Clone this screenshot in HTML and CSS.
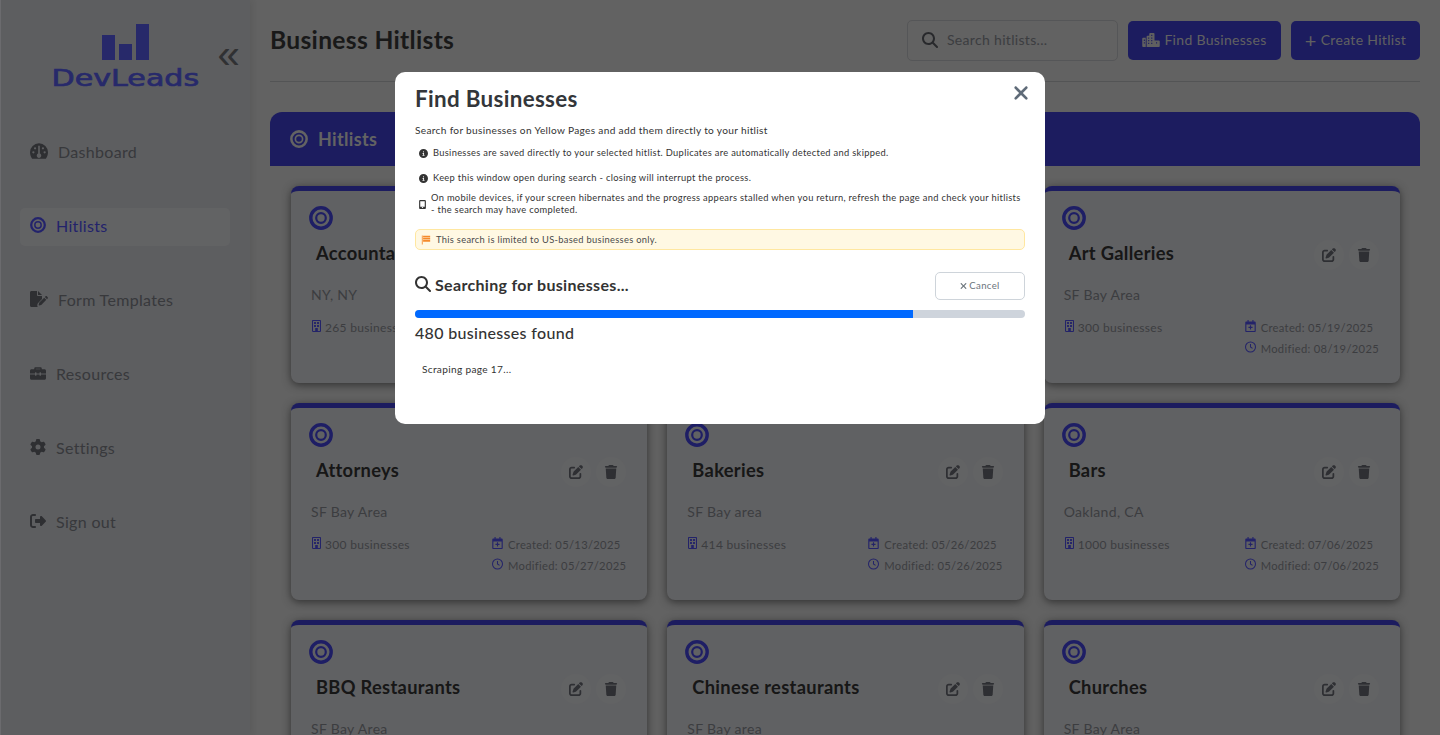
FILE: index.html
```html
<!DOCTYPE html>
<html lang="en">
<head>
    <meta charset="UTF-8">
    <meta name="viewport" content="width=device-width, initial-scale=1.0">
    <title>Business Hitlists</title>
    <link rel="stylesheet" href="styles.css">
</head>
<body>
<svg class="sprite" aria-hidden="true">
    <symbol id="i-search" viewBox="0 0 512 512"><path d="M416 208c0 45.9-14.9 88.3-40 122.7L502.6 457.4c12.5 12.5 12.5 32.8 0 45.3s-32.8 12.5-45.3 0L330.7 376c-34.4 25.2-76.8 40-122.7 40C93.1 416 0 322.9 0 208S93.1 0 208 0S416 93.1 416 208zM208 352a144 144 0 1 0 0-288 144 144 0 1 0 0 288z"/></symbol>
    <symbol id="i-trash" viewBox="0 0 448 512"><path d="M135.2 17.7L128 32H32C14.3 32 0 46.3 0 64S14.3 96 32 96H416c17.7 0 32-14.3 32-32s-14.3-32-32-32H320l-7.2-14.3C307.4 6.8 296.3 0 284.2 0H163.8c-12.1 0-23.2 6.8-28.6 17.7zM416 128H32L53.2 467c1.6 25.3 22.6 45 47.9 45H346.9c25.3 0 46.3-19.7 47.9-45L416 128z"/></symbol>
    <symbol id="i-edit" viewBox="0 0 512 512"><path d="M471.6 21.7c-21.9-21.9-57.3-21.9-79.2 0L362.3 51.7l97.9 97.9 30.1-30.1c21.9-21.9 21.9-57.3 0-79.2L471.6 21.7zm-299.2 220c-6.1 6.1-10.8 13.6-13.5 21.9l-29.6 88.8c-2.9 8.6-.6 18.1 5.8 24.6s15.9 8.7 24.6 5.8l88.8-29.6c8.2-2.7 15.7-7.4 21.9-13.5L437.7 172.3 339.7 74.3 172.4 241.7zM96 64C43 64 0 107 0 160V416c0 53 43 96 96 96H352c53 0 96-43 96-96V320c0-17.7-14.3-32-32-32s-32 14.3-32 32v96c0 17.7-14.3 32-32 32H96c-17.7 0-32-14.3-32-32V160c0-17.7 14.3-32 32-32h96c17.7 0 32-14.3 32-32s-14.3-32-32-32H96z"/></symbol>
    <symbol id="i-info" viewBox="0 0 512 512"><path d="M256 512A256 256 0 1 0 256 0a256 256 0 1 0 0 512zM216 336h24V272H216c-13.3 0-24-10.7-24-24s10.7-24 24-24h48c13.3 0 24 10.7 24 24v88h8c13.3 0 24 10.7 24 24s-10.7 24-24 24H216c-13.3 0-24-10.7-24-24s10.7-24 24-24zm40-208a32 32 0 1 1 0 64 32 32 0 1 1 0-64z"/></symbol>
    <symbol id="i-close" viewBox="0 0 384 512"><path d="M342.6 150.6c12.5-12.5 12.5-32.8 0-45.3s-32.8-12.5-45.3 0L192 210.7 86.6 105.4c-12.5-12.5-32.8-12.5-45.3 0s-12.5 32.8 0 45.3L146.7 256 41.4 361.4c-12.5 12.5-12.5 32.8 0 45.3s32.8 12.5 45.3 0L192 301.3 297.4 406.6c12.5 12.5 32.8 12.5 45.3 0s12.5-32.8 0-45.3L237.3 256 342.6 150.6z"/></symbol>
    <symbol id="i-signout" viewBox="0 0 512 512"><path d="M377.9 105.9L500.7 228.7c7.2 7.2 11.3 17.1 11.3 27.3s-4.1 20.1-11.3 27.3L377.9 406.1c-6.4 6.4-15 9.9-24 9.9c-18.7 0-33.9-15.2-33.9-33.9l0-62.1-128 0c-17.7 0-32-14.3-32-32l0-64c0-17.7 14.3-32 32-32l128 0 0-62.1c0-18.7 15.2-33.9 33.9-33.9c9 0 17.6 3.6 24 9.9zM160 96L96 96c-17.7 0-32 14.3-32 32l0 256c0 17.7 14.3 32 32 32l64 0c17.7 0 32 14.3 32 32s-14.3 32-32 32l-64 0c-53 0-96-43-96-96L0 128C0 75 43 32 96 32l64 0c17.7 0 32 14.3 32 32s-14.3 32-32 32z"/></symbol>
    <symbol id="i-gauge" viewBox="0 0 512 440"><path d="M0 256a256 256 0 1 1 512 0c0 70-25 130-60 184H60C25 386 0 326 0 256zm320 96c0-26.9-16.5-49.9-40-59.3V88c0-13.3-10.7-24-24-24s-24 10.7-24 24V292.7c-23.5 9.5-40 32.5-40 59.3c0 35.3 28.7 64 64 64s64-28.7 64-64zM144 176a32 32 0 1 0 0-64 32 32 0 1 0 0 64zm-16 80a32 32 0 1 0 -64 0 32 32 0 1 0 64 0zm288 32a32 32 0 1 0 0-64 32 32 0 1 0 0 64zM400 144a32 32 0 1 0 -64 0 32 32 0 1 0 64 0z"/></symbol>
    <symbol id="i-gear" viewBox="0 0 512 512"><path d="M495.9 166.6c3.2 8.7 .5 18.4-6.4 24.6l-43.3 39.4c1.1 8.3 1.7 16.8 1.7 25.4s-.6 17.1-1.7 25.4l43.3 39.4c6.9 6.2 9.6 15.9 6.4 24.6c-4.4 11.9-9.7 23.3-15.8 34.3l-4.7 8.1c-6.6 11-14 21.4-22.1 31.2c-5.9 7.2-15.7 9.6-24.5 6.8l-55.7-17.7c-13.4 10.3-28.2 18.9-44 25.4l-12.5 57.1c-2 9.1-9 16.3-18.2 17.8c-13.8 2.3-28 3.5-42.5 3.5s-28.7-1.2-42.5-3.5c-9.2-1.5-16.2-8.7-18.2-17.8l-12.5-57.1c-15.8-6.5-30.6-15.1-44-25.4L83.1 425.9c-8.8 2.8-18.6 .3-24.5-6.8c-8.1-9.8-15.5-20.2-22.1-31.2l-4.7-8.1c-6.1-11-11.4-22.4-15.8-34.3c-3.2-8.7-.5-18.4 6.4-24.6l43.3-39.4C64.6 273.1 64 264.6 64 256s.6-17.1 1.7-25.4L22.4 191.2c-6.9-6.2-9.6-15.9-6.4-24.6c4.4-11.9 9.7-23.3 15.8-34.3l4.7-8.1c6.6-11 14-21.4 22.1-31.2c5.9-7.2 15.7-9.6 24.5-6.8l55.7 17.7c13.4-10.3 28.2-18.9 44-25.4l12.5-57.1c2-9.1 9-16.3 18.2-17.8C227.3 1.2 241.5 0 256 0s28.7 1.2 42.5 3.5c9.2 1.5 16.2 8.7 18.2 17.8l12.5 57.1c15.8 6.5 30.6 15.1 44 25.4l55.7-17.7c8.8-2.8 18.6-.3 24.5 6.8c8.1 9.8 15.5 20.2 22.1 31.2l4.7 8.1c6.1 11 11.4 22.4 15.8 34.3zM256 336a80 80 0 1 0 0-160 80 80 0 1 0 0 160z"/></symbol>
    <symbol id="i-briefcase" viewBox="0 0 512 448"><path d="M176 40h160c22 0 40 18 40 40v24h88c26 0 48 22 48 48v88H352v-24c0-9-7-16-16-16h-16c-9 0-16 7-16 16v24H208v-24c0-9-7-16-16-16h-16c-9 0-16 7-16 16v24H0v-88c0-26 22-48 48-48h88V80c0-22 18-40 40-40zm8 64h144V88H184v16zM0 272h160v24c0 9 7 16 16 16h16c9 0 16-7 16-16v-24h96v24c0 9 7 16 16 16h16c9 0 16-7 16-16v-24h160v120c0 26-22 48-48 48H48c-26 0-48-22-48-48V272z"/></symbol>
    <symbol id="i-file" viewBox="0 0 576 512"><path d="M0 48C0 22 22 0 48 0h176v128c0 18 14 32 32 32h128v96L260 380c-8 8-14 18-17 29l-10 39c-3 13 0 26 7 36v28H48c-26 0-48-22-48-48V48zm256-48l128 128H256V0zM60 420c20-45 42-72 60-72 15 0 22 14 27 30 12-14 26-22 40-20l-8 28c-12 0-22 14-34 30-10 12-28 6-32-14-12 8-24 24-32 40l-21-22zM540 170l26 26c12 12 12 30 0 42l-22 22-68-68 22-22c12-12 30-12 42 0zM300 368l154-154 68 68-154 154c-4 4-9 7-15 9l-58 15c-10 2-19-7-17-17l15-58c1-6 4-12 7-17z"/></symbol>
    <symbol id="i-building" viewBox="0 0 384 512"><path fill-rule="evenodd" d="M40 0h304c22 0 40 18 40 40v432c0 22-18 40-40 40H40c-22 0-40-18-40-40V40C0 18 18 0 40 0zm4 44v424h296V44H44z"/><path d="M88 88h80v80H88zM216 88h80v80h-80zM88 216h80v80H88zM216 216h80v80h-80zM136 344h112v130H136z"/></symbol>
    <symbol id="i-calendar" viewBox="0 0 448 512"><path fill-rule="evenodd" d="M96 0h48v64h160V0h48v64h48c26 0 48 22 48 48v352c0 26-22 48-48 48H48c-26 0-48-22-48-48V112c0-26 22-48 48-48h48V0zM48 192v272h352V192H48zm152 32h48v64h64v48h-64v64h-48v-64h-64v-48h64v-64z"/></symbol>
    <symbol id="i-clock" viewBox="0 0 512 512"><path fill-rule="evenodd" d="M256 0a256 256 0 1 1 0 512A256 256 0 1 1 256 0zm0 48a208 208 0 1 0 0 416 208 208 0 1 0 0-416zm-24 72h48v124l84 56-27 40-105-70V120z"/></symbol>
    <symbol id="i-target" viewBox="0 0 24 24"><circle cx="12" cy="12" r="10.2" fill="none" stroke="currentColor" stroke-width="3.4"/><circle cx="12" cy="12" r="4.8" fill="none" stroke="currentColor" stroke-width="2.2"/></symbol>
    <symbol id="i-mobile" viewBox="0 0 384 512"><path fill-rule="evenodd" d="M64 0h256c35 0 64 29 64 64v384c0 35-29 64-64 64H64c-35 0-64-29-64-64V64C0 29 29 0 64 0zm0 64v320h256V64H64zm88 368a40 30 0 1 0 80 0 40 30 0 1 0-80 0z"/></symbol>
    <symbol id="i-flag" viewBox="0 0 24 24"><path d="M2 1h2v22H2zM5 2h17v4H5zM5 7h17v4H5zM5 12h17v4H5z"/></symbol>
    <symbol id="i-city" viewBox="0 0 640 512"><path fill-rule="evenodd" d="M0 208c0-18 14-32 32-32h96v336H32c-18 0-32-14-32-32V208zm160-80c0-18 14-32 32-32h64V32c0-18 14-32 32-32h128c18 0 32 14 32 32v240h160c18 0 32 14 32 32v176c0 18-14 32-32 32H160V128zM56 240v48h40v-48H56zm0 96v48h40v-48H56zm160-176v48h40v-48h-40zm0 96v48h40v-48h-40zm0 96v48h40v-48h-40zm112-192v48h40v-48h-40zm0 96v48h40v-48h-40zm0 96v48h40v-48h-40zm0-288v48h40V64h-40zm176 272v48h40v-48h-40z"/></symbol>
</svg>

<div class="app">
    <aside class="sidebar">
        <div class="brand">
            <div class="logo">
                <div class="logo-bars"><span class="bar-a"></span><span class="bar-b"></span><span class="bar-c"></span></div>
                <div class="logo-text">DevLeads</div>
            </div>
            <span class="collapse">«</span>
        </div>
        <nav class="nav">
            <a class="nav-item"><svg class="nav-icon wide"><use href="#i-gauge"/></svg>Dashboard</a>
            <a class="nav-item active"><svg class="nav-icon target"><use href="#i-target"/></svg>Hitlists</a>
            <a class="nav-item"><svg class="nav-icon wide"><use href="#i-file"/></svg>Form Templates</a>
            <a class="nav-item"><svg class="nav-icon"><use href="#i-briefcase"/></svg>Resources</a>
            <a class="nav-item"><svg class="nav-icon"><use href="#i-gear"/></svg>Settings</a>
            <a class="nav-item"><svg class="nav-icon"><use href="#i-signout"/></svg>Sign out</a>
        </nav>
    </aside>

    <main class="main">
        <header class="topbar">
            <h1>Business Hitlists</h1>
            <div class="top-actions">
                <div class="search-box"><svg class="search-icon"><use href="#i-search"/></svg><span>Search hitlists...</span></div>
                <button class="btn find-btn"><svg class="btn-icon"><use href="#i-city"/></svg>Find Businesses</button>
                <button class="btn create-btn"><span class="plus">+</span>Create Hitlist</button>
            </div>
        </header>

        <section class="panel">
            <div class="panel-head"><svg class="panel-icon"><use href="#i-target"/></svg>Hitlists</div>
            <div class="grid">
                <article class="card">
                    <svg class="card-target"><use href="#i-target"/></svg>
                    <div class="card-head"><h3>Accountants</h3></div>
                    <p class="place">NY, NY</p>
                    <div class="meta">
                        <div class="count"><svg class="meta-icon"><use href="#i-building"/></svg>265 businesses</div>
                    </div>
                </article>
                <article class="card"></article>
                <article class="card">
                    <svg class="card-target"><use href="#i-target"/></svg>
                    <div class="card-head"><h3>Art Galleries</h3><div class="tools"><span class="tool-btn"><svg class="tool"><use href="#i-edit"/></svg></span><span class="tool-btn"><svg class="tool"><use href="#i-trash"/></svg></span></div></div>
                    <p class="place">SF Bay Area</p>
                    <div class="meta">
                        <div class="count"><svg class="meta-icon"><use href="#i-building"/></svg>300 businesses</div>
                        <div class="dates">
                            <div><svg class="meta-icon"><use href="#i-calendar"/></svg>Created: 05/19/2025</div>
                            <div><svg class="meta-icon"><use href="#i-clock"/></svg>Modified: 08/19/2025</div>
                        </div>
                    </div>
                </article>
                <article class="card">
                    <svg class="card-target"><use href="#i-target"/></svg>
                    <div class="card-head"><h3>Attorneys</h3><div class="tools"><span class="tool-btn"><svg class="tool"><use href="#i-edit"/></svg></span><span class="tool-btn"><svg class="tool"><use href="#i-trash"/></svg></span></div></div>
                    <p class="place">SF Bay Area</p>
                    <div class="meta">
                        <div class="count"><svg class="meta-icon"><use href="#i-building"/></svg>300 businesses</div>
                        <div class="dates">
                            <div><svg class="meta-icon"><use href="#i-calendar"/></svg>Created: 05/13/2025</div>
                            <div><svg class="meta-icon"><use href="#i-clock"/></svg>Modified: 05/27/2025</div>
                        </div>
                    </div>
                </article>
                <article class="card">
                    <svg class="card-target"><use href="#i-target"/></svg>
                    <div class="card-head"><h3>Bakeries</h3><div class="tools"><span class="tool-btn"><svg class="tool"><use href="#i-edit"/></svg></span><span class="tool-btn"><svg class="tool"><use href="#i-trash"/></svg></span></div></div>
                    <p class="place">SF Bay area</p>
                    <div class="meta">
                        <div class="count"><svg class="meta-icon"><use href="#i-building"/></svg>414 businesses</div>
                        <div class="dates">
                            <div><svg class="meta-icon"><use href="#i-calendar"/></svg>Created: 05/26/2025</div>
                            <div><svg class="meta-icon"><use href="#i-clock"/></svg>Modified: 05/26/2025</div>
                        </div>
                    </div>
                </article>
                <article class="card">
                    <svg class="card-target"><use href="#i-target"/></svg>
                    <div class="card-head"><h3>Bars</h3><div class="tools"><span class="tool-btn"><svg class="tool"><use href="#i-edit"/></svg></span><span class="tool-btn"><svg class="tool"><use href="#i-trash"/></svg></span></div></div>
                    <p class="place">Oakland, CA</p>
                    <div class="meta">
                        <div class="count"><svg class="meta-icon"><use href="#i-building"/></svg>1000 businesses</div>
                        <div class="dates">
                            <div><svg class="meta-icon"><use href="#i-calendar"/></svg>Created: 07/06/2025</div>
                            <div><svg class="meta-icon"><use href="#i-clock"/></svg>Modified: 07/06/2025</div>
                        </div>
                    </div>
                </article>
                <article class="card">
                    <svg class="card-target"><use href="#i-target"/></svg>
                    <div class="card-head"><h3>BBQ Restaurants</h3><div class="tools"><span class="tool-btn"><svg class="tool"><use href="#i-edit"/></svg></span><span class="tool-btn"><svg class="tool"><use href="#i-trash"/></svg></span></div></div>
                    <p class="place">SF Bay Area</p>
                </article>
                <article class="card">
                    <svg class="card-target"><use href="#i-target"/></svg>
                    <div class="card-head"><h3>Chinese restaurants</h3><div class="tools"><span class="tool-btn"><svg class="tool"><use href="#i-edit"/></svg></span><span class="tool-btn"><svg class="tool"><use href="#i-trash"/></svg></span></div></div>
                    <p class="place">SF Bay area</p>
                </article>
                <article class="card">
                    <svg class="card-target"><use href="#i-target"/></svg>
                    <div class="card-head"><h3>Churches</h3><div class="tools"><span class="tool-btn"><svg class="tool"><use href="#i-edit"/></svg></span><span class="tool-btn"><svg class="tool"><use href="#i-trash"/></svg></span></div></div>
                    <p class="place">SF Bay Area</p>
                </article>
            </div>
        </section>
    </main>
</div>

<div class="overlay">
    <div class="modal">
        <svg class="modal-close"><use href="#i-close"/></svg>
        <h2>Find Businesses</h2>
        <p class="modal-desc">Search for businesses on Yellow Pages and add them directly to your hitlist</p>
        <ul class="notes">
            <li class="note-one"><svg class="note-icon"><use href="#i-info"/></svg>Businesses are saved directly to your selected hitlist. Duplicates are automatically detected and skipped.</li>
            <li class="note-two"><svg class="note-icon"><use href="#i-info"/></svg>Keep this window open during search - closing will interrupt the process.</li>
            <li class="note-three"><svg class="note-icon mobile"><use href="#i-mobile"/></svg><span>On mobile devices, if your screen hibernates and the progress appears stalled when you return, refresh the page and check your hitlists<br>- the search may have completed.</span></li>
        </ul>
        <div class="limit"><svg class="flag"><use href="#i-flag"/></svg>This search is limited to US-based businesses only.</div>
        <div class="search-status">
            <h4><svg class="status-icon"><use href="#i-search"/></svg>Searching for businesses...</h4>
            <button class="cancel"><svg class="cancel-icon"><use href="#i-close"/></svg>Cancel</button>
        </div>
        <div class="progress"><div class="progress-fill" style="width: 81.6%"></div></div>
        <div class="found">480 businesses found</div>
        <div class="scrape">Scraping page 17...</div>
    </div>
</div>
</body>
</html>
```

FILE: styles.css
```css
* {
    box-sizing: border-box;
}

body {
    margin: 0;
    height: 100vh;
    overflow: hidden;
    font-family: Lato, "Noto Sans", sans-serif;
    letter-spacing: 0.02em;
    color: #2f2f2f;
    background: #b2b2b2;
}

.sprite {
    display: none;
}

svg {
    fill: currentColor;
    flex-shrink: 0;
}

.app {
    display: flex;
    height: 100vh;
}

/* sidebar */
.sidebar {
    width: 250px;
    flex-shrink: 0;
    padding: 24px 20px 0 19px;
    background: #aaabaf;
    border-left: 1px solid #c4c4c8;
    box-shadow: 2px 0 6px rgba(0, 0, 0, 0.08);
}

.brand {
    position: relative;
    display: flex;
    justify-content: center;
    height: 109px;
}

.logo {
    display: flex;
    flex-direction: column;
    align-items: center;
    color: #474cc2;
}

.logo-bars {
    display: flex;
    align-items: flex-end;
    gap: 4px;
    height: 36px;
}

.logo-bars span {
    display: block;
    background: #474cc2;
}

.bar-a {
    width: 13px;
    height: 25px;
}

.bar-b {
    width: 13px;
    height: 16px;
}

.bar-c {
    width: 13px;
    height: 36px;
}

.logo-text {
    margin-top: 5px;
    font-family: "DejaVu Sans", sans-serif;
    font-size: 23px;
    line-height: 27px;
    letter-spacing: 0;
    -webkit-text-stroke: 0.7px #474cc2;
    transform: scaleX(1.31);
}

.collapse {
    position: absolute;
    right: -10px;
    top: 10px;
    font-family: "Liberation Sans", sans-serif;
    font-size: 40px;
    line-height: 40px;
    color: #58595d;
}

.nav {
    display: flex;
    flex-direction: column;
    gap: 36px;
    margin-top: 1px;
}

.nav-item {
    display: flex;
    align-items: center;
    gap: 10px;
    height: 38px;
    padding-left: 10px;
    padding-bottom: 4px;
    font-size: 16px;
    color: #66686e;
    border-radius: 5px;
}

.nav-item.active {
    color: #4040c4;
    background: #b3b4b7;
}

.nav-icon {
    width: 16px;
    height: 16px;
    color: #54565c;
}

.nav-icon.wide {
    width: 18px;
}

.nav-icon.target {
    color: #4040c4;
}

/* main */
.main {
    flex: 1;
    min-width: 0;
    padding: 20px 20px 0;
}

.topbar {
    display: flex;
    justify-content: space-between;
    align-items: center;
    height: 62px;
    padding-bottom: 21px;
    border-bottom: 1px solid #98999c;
    margin-bottom: 30px;
}

.topbar h1 {
    margin: 0 0 2px;
    font-size: 24.6px;
    font-weight: 700;
}

.top-actions {
    display: flex;
    align-items: center;
    gap: 10px;
}

.search-box {
    display: flex;
    align-items: center;
    gap: 9px;
    width: 211px;
    height: 41px;
    padding-left: 14px;
    padding-bottom: 1px;
    font-size: 14px;
    color: #6e7076;
    border: 1px solid #9c9da0;
    border-radius: 5px;
}

.search-icon {
    width: 16px;
    height: 16px;
    color: #4a4b50;
}

.btn {
    display: flex;
    align-items: center;
    justify-content: center;
    height: 39px;
    padding-bottom: 2px;
    border: none;
    border-radius: 5px;
    font-family: inherit;
    font-size: 14px;
    letter-spacing: inherit;
    color: #b0b0b0;
    background: #3434ae;
}

.find-btn {
    width: 153px;
    gap: 4px;
}

.create-btn {
    width: 129px;
    gap: 4px;
}

.btn-icon {
    width: 18px;
    height: 14px;
}

.plus {
    font-size: 20px;
    line-height: 20px;
}

.panel {
    border-radius: 12px 12px 0 0;
}

.panel-head {
    display: flex;
    align-items: center;
    gap: 10px;
    height: 54px;
    padding-left: 20px;
    font-size: 18px;
    font-weight: 700;
    color: #b4b4b4;
    background: #3434ae;
    border-radius: 12px 12px 0 0;
}

.panel-icon {
    width: 18px;
    height: 18px;
}

.grid {
    display: grid;
    grid-template-columns: repeat(3, 1fr);
    gap: 20px;
    padding: 20px 20px 20px 21px;
}

.card {
    min-height: 197px;
    padding: 15px 20px 0;
    background: #b0b1b4;
    border-top: 5px solid #3434ae;
    border-radius: 8px;
    box-shadow: 0 2px 8px rgba(0, 0, 0, 0.5);
}

.card-target {
    display: block;
    width: 24px;
    height: 24px;
    margin-left: -2px;
    color: #3838b8;
}

.card-head {
    display: flex;
    justify-content: space-between;
    align-items: center;
    height: 36px;
    margin-top: 5px;
    padding-left: 5px;
}

.card-head h3 {
    margin: 0;
    font-size: 18.3px;
    font-weight: 700;
    color: #2a2a2a;
}

.tools {
    display: flex;
    gap: 5px;
    margin: 4px 1px 0 0;
}

.tool-btn {
    display: flex;
    align-items: center;
    justify-content: center;
    width: 30px;
    height: 30px;
    background: #b3b4b7;
    border-radius: 50%;
}

.tool {
    width: 14px;
    height: 14px;
    color: #55575d;
}

.place {
    margin: 14px 0 0;
    font-size: 14px;
    line-height: 20px;
    color: #6e7076;
}

.meta {
    display: flex;
    justify-content: space-between;
    margin: 12px 1px 0 0;
    font-size: 12px;
    color: #6e7076;
}

.count {
    display: flex;
    align-items: center;
    gap: 3px;
    height: 21px;
}

.dates {
    font-size: 11.2px;
}

.dates div {
    display: flex;
    align-items: center;
    gap: 5px;
    height: 21px;
}

.meta-icon {
    width: 11px;
    height: 12px;
    margin-top: -4px;
    color: #4040c0;
}

/* modal */
.overlay {
    position: fixed;
    inset: 0;
    display: flex;
    justify-content: center;
    align-items: flex-start;
    padding-top: 72px;
    background: rgba(0, 0, 0, 0.45);
}

.modal {
    position: relative;
    width: 650px;
    height: 352px;
    padding: 14px 20px 0;
    font-size: 9.3px;
    color: #333;
    background: #fff;
    border-radius: 10px;
}

.modal h2 {
    margin: 0;
    font-size: 22.4px;
    line-height: 26px;
    font-weight: 700;
    color: #33363a;
}

.modal-close {
    position: absolute;
    right: 16px;
    top: 9px;
    width: 16px;
    height: 24px;
    color: #5f6b78;
}

.modal-desc {
    margin: 11px 0 0;
    font-size: 10.15px;
    line-height: 14px;
}

.notes {
    list-style: none;
    margin: 0;
    padding: 0;
}

.notes li {
    display: flex;
    align-items: center;
    gap: 5px;
    line-height: 12px;
}

.note-one {
    margin: 10px 0 0 4px;
}

.note-two {
    margin: 13px 0 0 4px;
}

.notes .note-three {
    margin: 8px 0 0 4px;
}

.note-icon {
    width: 9px;
    height: 9px;
}

.note-icon.mobile {
    width: 7px;
    height: 9px;
}

.limit {
    display: flex;
    align-items: center;
    gap: 5px;
    height: 21px;
    margin-top: 13px;
    padding-left: 5px;
    color: #4a4a4a;
    background: #fff8e3;
    border: 1px solid #ffe7a0;
    border-radius: 5px;
}

.flag {
    width: 10px;
    height: 10px;
    color: #f58a2c;
}

.search-status {
    display: flex;
    justify-content: space-between;
    align-items: center;
    margin-top: 22px;
}

.search-status h4 {
    display: flex;
    align-items: center;
    gap: 4px;
    margin: -4px 0 0;
    font-size: 16px;
    font-weight: 700;
    color: #333;
}

.status-icon {
    width: 16px;
    height: 16px;
}

.cancel {
    display: flex;
    align-items: center;
    justify-content: center;
    gap: 2px;
    width: 90px;
    height: 28px;
    padding-bottom: 2px;
    font-family: inherit;
    font-size: 9.6px;
    letter-spacing: inherit;
    color: #6c757d;
    background: #fff;
    border: 1px solid #ced4da;
    border-radius: 5px;
}

.cancel-icon {
    width: 7px;
    height: 10px;
}

.progress {
    height: 8px;
    margin-top: 10px;
    background: #ced4dc;
    border-radius: 4px;
    overflow: hidden;
}

.progress-fill {
    height: 100%;
    background: #0069ff;
}

.found {
    margin-top: 5px;
    font-size: 16px;
    line-height: 20px;
    font-weight: 500;
    color: #333;
}

.scrape {
    margin: 19px 0 0 7px;
    font-size: 10.15px;
    line-height: 14px;
}
```
